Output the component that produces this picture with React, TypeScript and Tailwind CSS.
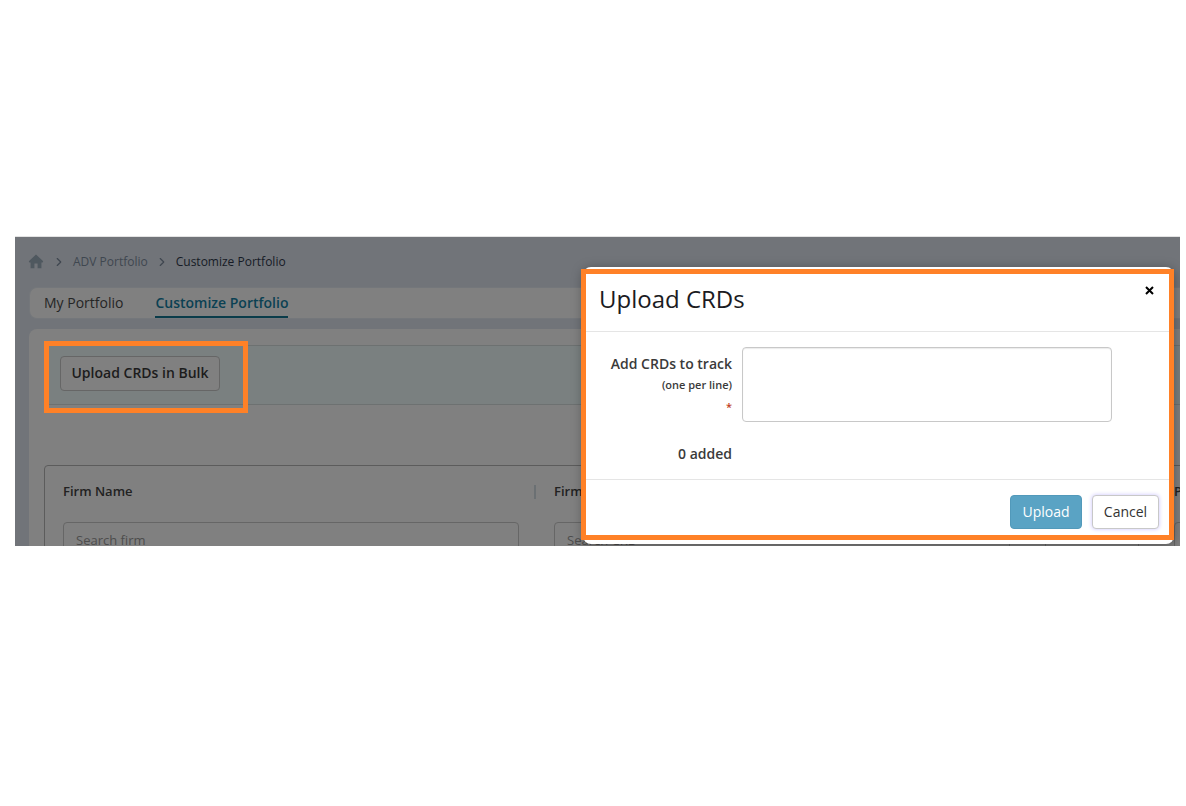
import { ChevronRight } from "lucide-react";

const columns = [
  { label: "Firm Name", placeholder: "Search firm", width: "w-[491px]" },
  { label: "Firm CRD", placeholder: "Search CRD", width: "w-[491px]" },
  { label: "Status", placeholder: "", width: "w-[129px]" },
  { label: "Portfolio", placeholder: "", width: "w-[300px]" },
];

function HomeIcon() {
  return (
    <svg viewBox="0 0 16 16" className="h-4 w-4 fill-[#4f585f]" aria-hidden>
      <path d="M8 0.5 L15.2 7.3 L14.6 8.4 H13.4 V14.2 H9.6 V9.6 H6.4 V14.2 H2.6 V8.4 H1.4 L0.8 7.3 Z" />
    </svg>
  );
}

function Breadcrumb() {
  return (
    <nav aria-label="Breadcrumb" className="px-[13px] pt-4">
      <ol className="flex h-[18px] items-center text-xs text-[#3f4750]">
        <li>
          <a href="#home" aria-label="Home">
            <HomeIcon />
          </a>
        </li>
        <li className="flex items-center">
          <ChevronRight className="mr-[7px] ml-2 h-[14px] w-[14px]" aria-hidden />
          <a href="#portfolio">ADV Portfolio</a>
        </li>
        <li className="flex items-center">
          <ChevronRight className="mx-[7px] h-[14px] w-[14px]" aria-hidden />
          <span className="font-medium text-[#161b26]">Customize Portfolio</span>
        </li>
      </ol>
    </nav>
  );
}

function Tabs() {
  return (
    <nav className="mt-4 ml-[14px] flex h-8 rounded-l-lg border border-r-0 border-[#74777b] bg-[#808080] pl-[14px] text-sm leading-[30px]">
      <a href="#mine" className="text-[#252525]">
        My Portfolio
      </a>
      <a
        href="#customize"
        className="ml-8 h-[30px] border-b-2 border-[#0a3c4a] font-semibold text-[#0b4153]"
      >
        Customize Portfolio
      </a>
    </nav>
  );
}

function FirmTable() {
  return (
    <div className="mt-[60px] ml-[15px] w-[1420px] rounded-tl border border-[#5c5c5c]">
      <table className="table-fixed border-collapse text-left">
        <thead>
          <tr className="h-[51px] text-[13px] text-[#222]">
            {columns.map((c) => (
              <th key={c.label} className={`${c.width} p-0 font-semibold`}>
                <div className="ml-[18px] flex items-center justify-between">
                  {c.label}
                  <span className="h-[14px] w-[2px] bg-[#6b7073]" />
                </div>
              </th>
            ))}
          </tr>
        </thead>
        <tbody>
          <tr>
            {columns.map((c) => (
              <td key={c.label} className="pt-[5px] pr-[17px] pb-3 pl-[18px]">
                <input
                  type="text"
                  aria-label={c.label}
                  placeholder={c.placeholder}
                  className="h-9 w-full rounded border border-[#666] px-3 text-[13px] placeholder:text-[#4d4d4d]"
                />
              </td>
            ))}
          </tr>
        </tbody>
      </table>
    </div>
  );
}

function UploadDialog() {
  return (
    <section
      role="dialog"
      aria-labelledby="upload-title"
      className="absolute top-[30px] right-[6px] w-[591px] rounded-lg bg-white pt-[2px] pb-1 shadow-[0_2px_12px_rgba(0,0,0,0.35)]"
    >
      <div className="-ml-[2px] border-[5px] border-[#ff8127]">
        <header className="flex h-[58px] items-start justify-between border-b border-[#e5e5e5] pr-[15px] pl-[13px]">
          <h2 id="upload-title" className="pt-[9px] text-2xl text-[#1b1b22]">
            Upload CRDs
          </h2>
          <button type="button" aria-label="Close" className="mt-3 text-black">
            <svg viewBox="0 0 9 9" className="h-[9px] w-[9px]" aria-hidden>
              <path d="M1 1 L8 8 M8 1 L1 8" stroke="currentColor" strokeWidth="2" />
            </svg>
          </button>
        </header>
        <div className="flex h-[147px] gap-[10px] pt-[15px] text-[#3a3a3a]">
          <div className="w-[146px] text-right text-sm font-semibold">
            <label htmlFor="crds" className="block pt-[7px]">
              Add CRDs to track
              <span className="block text-[11px] leading-[22px]">(one per line)</span>
              <span className="block text-[11px] leading-[22px] text-[#c0401c]">*</span>
            </label>
            <p className="pt-[26px]">0 added</p>
          </div>
          <textarea
            id="crds"
            className="block h-[75px] w-[370px] resize-none rounded border border-[#c8c8c8] shadow-[inset_0_1px_1px_rgba(0,0,0,0.08)]"
          />
        </div>
        <footer className="flex h-[56px] justify-end gap-[10px] border-t border-[#e5e5e5] pt-[15px] pr-[10px] text-sm">
          <button
            type="button"
            className="h-[34px] w-[72px] rounded border border-[#5299ba] bg-[#5aa3c4] text-white"
          >
            Upload
          </button>
          <button
            type="button"
            className="h-[34px] w-[67px] rounded border border-[#c8c8c8] bg-white text-[#333] shadow-[0_0_4px_#c9c2ff]"
          >
            Cancel
          </button>
        </footer>
      </div>
    </section>
  );
}

export default function App() {
  return (
    <main className="min-h-screen bg-white pt-[236px] pr-[6px] pl-[15px] font-['Open_Sans',sans-serif]">
      <div className="relative h-[310px] overflow-hidden border-t border-[#e3e3e3] bg-[#717479]">
        <Breadcrumb />
        <Tabs />
        <div className="mt-[10px] ml-[14px] rounded-tl-lg bg-[#808080] pt-4">
          <div className="relative ml-[15px] h-[60px] border-y border-[#6d7171] bg-[#7a8080] pt-[10px] pl-4">
            <button
              type="button"
              className="h-[35px] w-40 rounded border border-[#666] bg-[#808080] pb-[2px] text-sm font-semibold text-[#1c1c1c]"
            >
              Upload CRDs in Bulk
            </button>
            <span className="pointer-events-none absolute -top-[5px] left-0 h-[72px] w-[204px] border-[5px] border-[#ff8127]" />
          </div>
          <FirmTable />
        </div>
        <UploadDialog />
      </div>
    </main>
  );
}
